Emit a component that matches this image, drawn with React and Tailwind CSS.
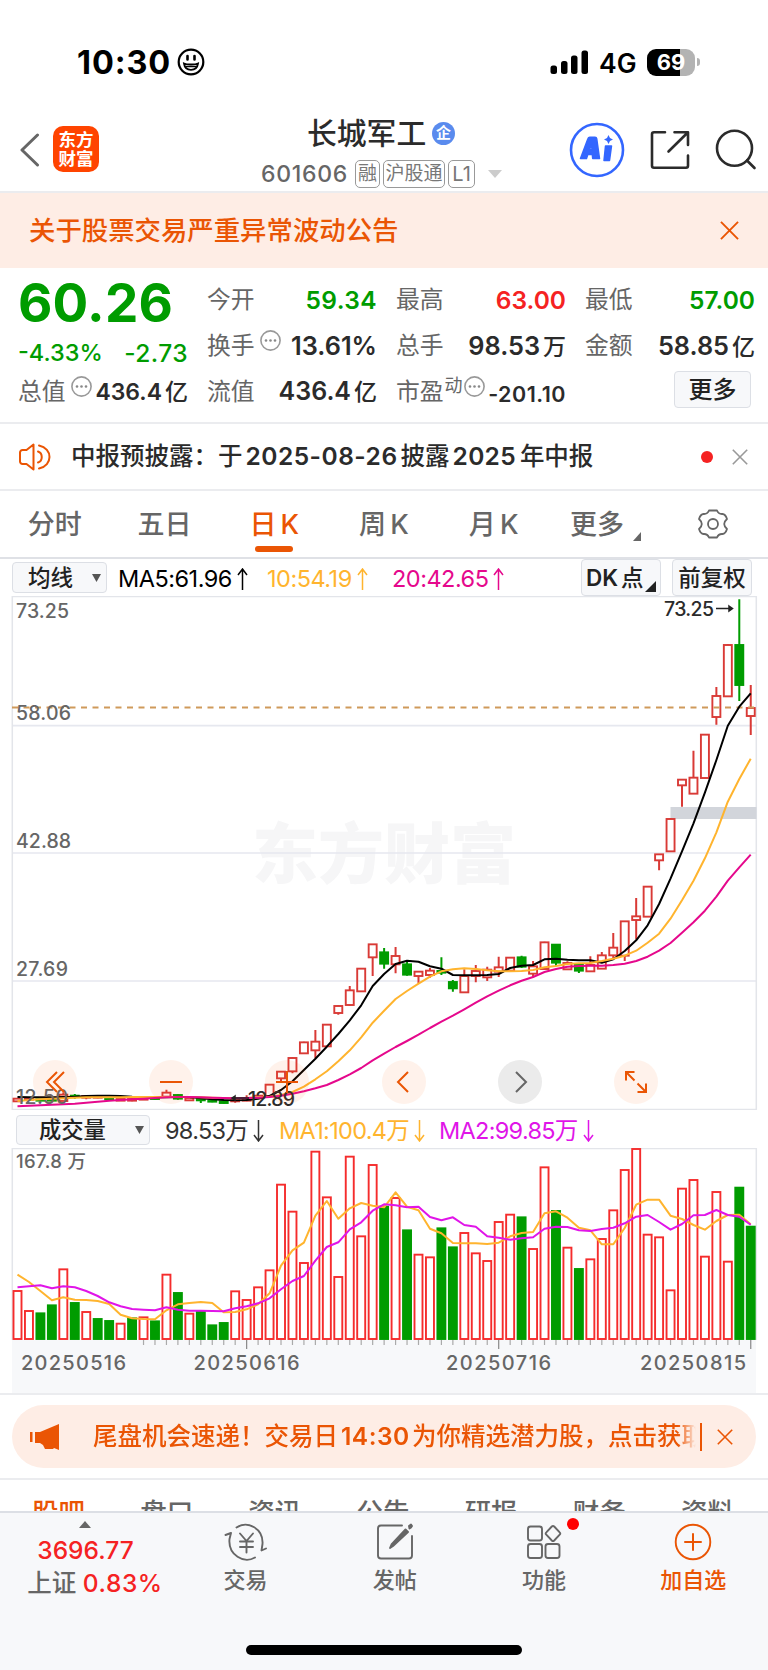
import { Fragment } from 'react';
import clsx from 'clsx';

const FONT = "font-['Inter','Noto_Sans_CJK_SC',sans-serif]";

const PITCH = 11.457;
const FIRST_X = 17.5;
const xAt = (i) => FIRST_X + i * PITCH;

// [up, high, top, bottom, low], in thirds of a pixel below y = 840
const CANDLES = [
    [1, 774, 776, 784, 784], [1, 774, 775, 779, 782], [0, 776, 778, 782, 784], [0, 774, 778, 782, 783],
    [1, 757, 764, 783, 783], [0, 762, 767, 771, 776], [1, 766, 768, 773, 778], [1, 768, 770, 773, 775],
    [0, 771, 774, 778, 781], [1, 774, 777, 782, 783], [1, 774, 777, 782, 784], [1, 773, 775, 779, 780],
    [0, 772, 774, 777, 778], [1, 749, 758, 770, 772], [0, 762, 765, 776, 779], [1, 771, 774, 781, 783],
    [0, 775, 777, 781, 789], [0, 781, 783, 785, 787], [0, 781, 784, 789, 791], [1, 778, 780, 784, 788],
    [1, 766, 775, 782, 784], [1, 764, 767, 774, 777], [1, 732, 734, 768, 770], [1, 693, 695, 715, 727],
    [1, 652, 654, 694, 700], [1, 605, 607, 640, 641], [1, 570, 605, 631, 655], [1, 552, 554, 619, 620],
    [1, 496, 498, 519, 524], [1, 438, 451, 495, 497], [1, 384, 386, 454, 455], [1, 312, 313, 352, 408],
    [0, 324, 337, 371, 386], [1, 321, 348, 373, 400], [0, 366, 373, 404, 407], [1, 394, 395, 408, 430],
    [1, 384, 392, 405, 413], [0, 352, 393, 398, 405], [0, 420, 426, 445, 455], [1, 388, 408, 457, 458],
    [1, 375, 393, 408, 427], [1, 380, 389, 412, 423], [1, 350, 382, 395, 411], [1, 351, 353, 392, 394],
    [0, 347, 352, 380, 384], [1, 363, 379, 401, 412], [1, 305, 307, 387, 388], [0, 312, 314, 368, 377],
    [1, 364, 369, 388, 389], [0, 370, 374, 392, 399], [1, 349, 375, 394, 396], [1, 336, 346, 386, 387],
    [1, 279, 323, 346, 355], [1, 243, 244, 347, 363], [1, 174, 229, 240, 298], [1, 139, 140, 230, 231],
    [1, 42, 43, 61, 91], [1, -65, -63, 34, 35], [1, -182, -181, -164, -100], [1, -268, -187, -139, -138],
    [1, -318, -316, -186, -185], [1, -459, -432, -369, -346], [1, -587, -585, -431, -430], [0, -722, -585, -465, -417],
    [1, -465, -396, -372, -315],
];

const MA5 = [771, 772, 772, 772, 771, 770, 768, 767, 767, 768, 770, 771, 772, 772, 771, 771, 775, 778, 780, 781, 780, 776, 768, 750, 724, 690, 656, 620, 582, 541, 496, 438, 402, 372, 362, 365, 379, 386, 405, 406, 406, 405, 402, 384, 377, 375, 358, 356, 359, 361, 361, 368, 358, 333, 301, 256, 192, 116, 34, -50, -142, -240, -343, -400, -440];
const MA10 = [783, 780, 778, 776, 775, 773, 772, 772, 772, 772, 771, 771, 771, 771, 771, 771, 772, 773, 774, 775, 774, 772, 770, 765, 756, 740, 718, 694, 664, 631, 592, 548, 512, 477, 453, 431, 410, 394, 388, 385, 387, 391, 394, 394, 393, 390, 382, 378, 372, 370, 369, 363, 356, 347, 332, 308, 281, 236, 181, 122, 55, -23, -115, -183, -244];
const MA20 = [799, 797, 796, 794, 793, 791, 788, 785, 782, 780, 778, 776, 774, 772, 771, 771, 772, 773, 774, 775, 774, 773, 771, 767, 761, 754, 745, 735, 720, 703, 684, 661, 641, 621, 603, 584, 564, 545, 527, 508, 488, 469, 452, 436, 422, 411, 396, 387, 380, 378, 377, 377, 375, 371, 363, 350, 332, 309, 278, 247, 212, 170, 122, 82, 44];

// [up, top], in thirds of a pixel below y = 1100
const VOLUMES = [
    [1, 573], [1, 633], [0, 640], [0, 616], [1, 508], [0, 609], [1, 636], [0, 657], [0, 663], [1, 671], [0, 655],
    [1, 652], [0, 664], [1, 524], [0, 579], [1, 641], [0, 634], [0, 676], [0, 669], [1, 574], [1, 600], [1, 562],
    [1, 511], [1, 254], [1, 335], [1, 489], [1, 155], [1, 292], [1, 531], [1, 170], [1, 409], [1, 195], [0, 320],
    [1, 294], [0, 391], [1, 464], [1, 472], [0, 385], [0, 442], [1, 399], [1, 460], [1, 483], [1, 366], [1, 344],
    [0, 352], [1, 447], [1, 202], [0, 333], [1, 443], [0, 507], [1, 478], [1, 417], [1, 331], [1, 210], [1, 147],
    [1, 404], [1, 412], [1, 571], [1, 266], [1, 240], [1, 470], [1, 276], [1, 485], [0, 263], [0, 380],
];

const VMA1 = [524, 546, 573, 601, 592, 599, 600, 603, 612, 644, 655, 657, 658, 631, 613, 609, 606, 609, 637, 636, 628, 613, 580, 497, 451, 428, 347, 303, 356, 325, 309, 317, 322, 277, 320, 331, 386, 400, 429, 430, 430, 432, 428, 409, 399, 396, 340, 334, 353, 383, 391, 433, 433, 384, 314, 299, 299, 347, 357, 375, 389, 363, 345, 344, 373];
const VMA2 = [562, 559, 556, 565, 559, 562, 573, 588, 607, 619, 627, 629, 631, 622, 629, 632, 632, 633, 634, 625, 619, 610, 595, 568, 543, 528, 482, 441, 427, 388, 367, 332, 313, 316, 322, 320, 351, 361, 352, 375, 380, 409, 413, 419, 415, 412, 386, 380, 381, 391, 393, 387, 383, 370, 350, 345, 366, 389, 372, 346, 345, 330, 345, 350, 374];

const polyline = (values, base) => values.map((v, i) => `${xAt(i).toFixed(1)},${(base + v / 3).toFixed(1)}`).join(' ');

function Cross({ size, className }) {
    return (
        <svg width={size} height={size} viewBox="0 0 20 20" fill="none" stroke="currentColor" strokeWidth="2" className={className}>
            <path d="M1 1 19 19M19 1 1 19" />
        </svg>
    );
}

function Arrow({ down }) {
    return (
        <svg width="11" height="22" viewBox="0 0 11 22" fill="none" stroke="currentColor" strokeWidth="1.5" className={clsx('ml-[5px] shrink-0', down && 'rotate-180')}>
            <path d="M5.5 22V1M1 7l4.5-6L10 7" />
        </svg>
    );
}

function Caret() {
    return (
        <svg width="9" height="8" viewBox="0 0 9 8" className="shrink-0">
            <path d="M0 0h9L4.500 8z" fill="#555" />
        </svg>
    );
}

function Info() {
    return (
        <svg width="21" height="21" viewBox="0 0 21 21" className="mb-[12px] ml-[5px] shrink-0">
            <circle cx="10.500" cy="10.500" r="9.600" fill="none" stroke="#999" strokeWidth="1.600" />
            <g fill="#888">
                <circle cx="6" cy="10.500" r="1.300" />
                <circle cx="10.500" cy="10.500" r="1.300" />
                <circle cx="15" cy="10.500" r="1.300" />
            </g>
        </svg>
    );
}

function StatusBar() {
    return (
        <div className="flex h-[100px] items-start pt-[43px]">
            <span className="ml-[77px] w-[94px] whitespace-nowrap text-[32.5px] leading-[39px] font-bold tracking-[0.9px] text-black">10:30</span>
            <svg width="28" height="28" viewBox="0 0 28 28" className="mt-[5px] ml-[6px]" fill="none" stroke="#000" strokeWidth="2.200">
                <circle cx="14" cy="14" r="12.300" />
                <path d="M7 15.500c2.500 1.300 11.500 1.300 14 0-.6 4-3.400 6.300-7 6.300s-6.400-2.300-7-6.300z" strokeWidth="1.800" />
                <path d="M8.500 18.500h11" strokeWidth="1.500" />
                <path d="M10.500 8v3.500M17.500 8v3.500" strokeWidth="2.600" strokeLinecap="round" />
            </svg>
            <svg width="38" height="25" viewBox="0 0 38 25" className="mt-[7px] ml-[345px]">
                <rect x="0.500" y="15.500" width="6.500" height="8.500" rx="2.500" />
                <rect x="11" y="11" width="6.500" height="13" rx="2.500" />
                <rect x="21" y="5.500" width="6.500" height="18.500" rx="2.500" />
                <rect x="31.500" y="0.500" width="6.500" height="23.500" rx="2.500" />
            </svg>
            <span className="ml-[11px] w-[38px] whitespace-nowrap text-[26.5px] leading-[41px] font-semibold text-black">4G</span>
            <div className="mt-[6px] ml-[10px] flex h-[27px] w-[48px] items-center justify-center rounded-[9px] bg-gradient-to-r from-black from-[69%] to-[#b3b3b3] to-[69%] text-[22px] font-bold text-white">
                69
            </div>
            <div className="mt-[15px] ml-[2px] h-[8px] w-[3px] rounded-r-full bg-[#b3b3b3]" />
        </div>
    );
}

function Header() {
    return (
        <div className="flex h-[93px] border-b-2 border-[#ebecef] text-[#2b2b2b]">
            <svg width="21" height="34" viewBox="0 0 21 34" className="mt-[33px] ml-[19px]" fill="none" stroke="#666" strokeWidth="3" strokeLinecap="round" strokeLinejoin="round">
                <path d="M18.500 2 3 17l15.500 15" />
            </svg>
            <div className="mt-[26px] ml-[13px] flex h-[46px] w-[46px] flex-col items-center justify-center rounded-[10px] bg-[#ff4400] text-[17.5px] leading-[19px] font-bold text-white">
                <span>东方</span>
                <span>财富</span>
            </div>
            <div className="ml-[162px] w-[241px]">
                <div className="mt-[12px] ml-[46px] flex h-[42px] items-center">
                    <span className="w-[119px] whitespace-nowrap text-[29.8px] font-medium">长城军工</span>
                    <span className="ml-[6px] flex h-[23px] w-[23px] items-center justify-center rounded-full bg-[#5a8bee] text-[15px] font-bold text-white">企</span>
                </div>
                <div className="mt-[5px] flex h-[30px] items-center gap-[3px] text-[#777]">
                    <span className="mr-[5px] w-[86px] whitespace-nowrap text-[23px] tracking-[0.7px] font-medium text-[#666]">601606</span>
                    <span className="flex h-[28px] w-[25px] items-center justify-center rounded-[5px] border-[1.5px] border-[#999] text-[19px]">融</span>
                    <span className="flex h-[28px] w-[63px] items-center justify-center rounded-[5px] border-[1.5px] border-[#999] text-[19px]">沪股通</span>
                    <span className="flex h-[28px] w-[27px] items-center justify-center rounded-[5px] border-[1.5px] border-[#999] text-[20px]">L1</span>
                    <svg width="14" height="8" viewBox="0 0 14 8" className="ml-[10px] shrink-0">
                        <path d="M0 0h14L7 8z" fill="#ccc" />
                    </svg>
                </div>
            </div>
            <svg width="56" height="56" viewBox="0 0 56 56" className="mt-[22px] ml-[67px]">
                <circle cx="28" cy="28" r="26" fill="none" stroke="#3366ff" strokeWidth="2.600" />
                <path fillRule="evenodd" d="M11.500 36.500 19 16.500q.4-1.300 1.800-1.300H26q1.500 0 1.700 1.500L30.500 36.500h-6.800l-.4-4h-4.500L17.500 36.500zM20.500 27.500h2.500l-.4-5z" fill="#3366ff" stroke="#3366ff" strokeWidth="1.500" strokeLinejoin="round" />
                <path d="M36.500 24h6l-2 14.500H35z" fill="#3366ff" stroke="#3366ff" strokeWidth="1.500" strokeLinejoin="round" />
                <path d="m39.500 13 1.500 3 3 1.500-3 1.500-1.500 3-1.500-3-3-1.500 3-1.500z" fill="#3366ff" />
            </svg>
            <svg width="40" height="40" viewBox="0 0 40 40" className="mt-[30px] ml-[25px]" fill="none" stroke="#2b2b2b" strokeWidth="2.600" strokeLinecap="round" strokeLinejoin="round">
                <path d="M15 2.300H4A2 2 0 0 0 2 4.300v31.500a2 2 0 0 0 2 2h32a2 2 0 0 0 2-2V25.500M24.500 2.300H38V15M37.500 2.800 18.500 21.500" />
            </svg>
            <svg width="42" height="42" viewBox="0 0 42 42" className="mt-[28px] ml-[25px]" fill="none" stroke="#2b2b2b" strokeWidth="2.600" strokeLinecap="round">
                <circle cx="19.500" cy="20.300" r="17.500" />
                <path d="M32 32.500 39.500 40" />
            </svg>
        </div>
    );
}

function Cell({ label, info, sup, value, unit, color = 'text-[#2b2b2b]', size = 'text-[24.5px]' }) {
    return (
        <div className="flex items-center justify-between whitespace-nowrap">
            <span className="flex items-center text-[23.8px] text-[#666]">
                {label}
                {sup && <span className="mb-[14px] -mr-[4px] ml-[1px] text-[18px]">{sup}</span>}
                {info && <Info />}
            </span>
            <span className={clsx('font-[560]', size, color)}>
                {value}
                {unit && <span className="ml-[3px] text-[23px] font-medium">{unit}</span>}
            </span>
        </div>
    );
}

function Quote() {
    return (
        <div className="grid h-[156px] grid-cols-[170px_170px_170px_170px] grid-rows-[46px_46px_46px] gap-x-[19px] border-b-2 border-[#ebecef] pt-[9px] pl-[18px]">
            <div className="row-span-2 text-[#009c00]">
                <div className="mt-[3px] text-[53px] leading-[46px] font-bold tracking-[0.2px]">60.26</div>
                <div className="mt-[12px] flex justify-between text-[23.5px] leading-[30px] font-medium">
                    <span>-4.33%</span>
                    <span className="text-[24.5px] tracking-[0.4px]">-2.73</span>
                </div>
            </div>
            <Cell label="今开" value="59.34" color="text-[#009c00] tracking-[0.4px]" />
            <Cell label="最高" value="63.00" color="text-[#f52222]" />
            <Cell label="最低" value="57.00" color="text-[#009c00]" />
            <Cell label="换手" info value="13.61%" size="text-[25.3px]" />
            <Cell label="总手" value="98.53" unit="万" size="text-[25.3px]" />
            <Cell label="金额" value="58.85" unit="亿" size="text-[25.3px]" />
            <Cell label="总值" info value="436.4" unit="亿" size="text-[23px]" />
            <Cell label="流值" value="436.4" unit="亿" size="text-[25px]" />
            <Cell label="市盈" sup="动" info value="-201.10" size="text-[21.5px] tracking-[0.5px] pt-[4px]" />
            <div className="flex justify-end pt-[2px] pr-[4px]">
                <span className="flex h-[37px] w-[77px] items-center justify-center rounded-[4px] border border-[#dcdfe5] bg-[#f7f8fa] text-[24px] font-medium text-[#222]">更多</span>
            </div>
        </div>
    );
}

function Notice() {
    return (
        <div className="flex h-[67px] items-center border-b-2 border-[#ebecef] text-[#2b2b2b]">
            <svg width="34" height="28" viewBox="0 0 34 28" className="ml-[18px]" fill="none" stroke="#ea5504" strokeWidth="2" strokeLinecap="round" strokeLinejoin="round">
                <path d="M15.500 1.500v25L8.500 21H4.500A2.500 2.500 0 0 1 2 18.500v-9A2.500 2.500 0 0 1 4.500 7h4zM20 8.500c5 1.500 5 9.500 0 11M21 2.500c14 3 14 20 0 23" />
            </svg>
            <span className="ml-[19px] text-[24.5px] font-medium whitespace-nowrap">中报预披露：于</span>
            <span className="ml-[3px] text-[24.5px] font-[560] tracking-[0.5px] whitespace-nowrap">2025-08-26</span>
            <span className="ml-[3px] text-[24.5px] font-medium whitespace-nowrap">披露</span>
            <span className="ml-[3px] text-[24.5px] font-[560] tracking-[0.3px] whitespace-nowrap">2025</span>
            <span className="ml-[4px] text-[24.5px] font-medium whitespace-nowrap">年中报</span>
            <span className="mr-[19px] ml-auto h-[12px] w-[12px] rounded-full bg-[#f52222]" />
            <Cross size={16} className="mr-[20px] text-[#999]" />
        </div>
    );
}

function Tabs() {
    const tabs = ['分时', '五日', '日 K', '周 K', '月 K', '更多'];
    return (
        <div className="grid h-[68px] grid-cols-7 border-b-2 border-[#dfe1e6] text-[27px] font-medium text-[#666]">
            {tabs.map((tab) => (
                <div key={tab} className={clsx('flex flex-col items-center whitespace-nowrap', tab === '日 K' && 'text-[#ea5504]')}>
                    <span className="mt-[13px] flex h-[42px] items-center [word-spacing:-3px]">
                        {tab === '更多' ? <span className="ml-[4px]">{tab}</span> : tab}
                        {tab === '更多' && (
                            <svg width="8" height="9" viewBox="0 0 8 9" className="mt-[22px] ml-[9px]">
                                <path d="M8 0v9H0z" fill="#666" />
                            </svg>
                        )}
                    </span>
                    {tab === '日 K' && <span className="h-[6px] w-[38px] rounded-full bg-[#ea5504]" />}
                </div>
            ))}
            <div className="flex justify-center pt-[17px]">
                <svg width="32" height="32" viewBox="0 0 32 32" fill="none" stroke="#666" strokeWidth="1.800" strokeLinejoin="round">
                    <path d="M12 2.500h8q1.500 3.800 5.500 3.500 3 .2 4.500 5-2.800 2.500-2.800 5t2.800 5q-1.500 4.800-4.500 5-4-.3-5.500 3.500h-8q-1.500-3.800-5.500-3.500-3-.2-4.500-5 2.800-2.500 2.800-5T2 11q1.500-4.800 4.500-5 4 .3 5.500-3.500z" />
                    <circle cx="16" cy="16" r="5" />
                </svg>
            </div>
        </div>
    );
}

function MaBar() {
    return (
        <div className="flex h-[37px] items-center pl-[12px] text-[23.5px] whitespace-nowrap">
            <span className="flex h-[31px] w-[95px] items-center justify-between rounded-[4px] border border-[#dcdfe5] bg-[#f7f8fa] pt-px pr-[5px] pl-[15px] text-[22.5px] font-medium text-[#222]">
                均线
                <Caret />
            </span>
            <span className="ml-[11px] flex w-[149px] items-center pt-[2px] font-[370] tracking-[-0.5px] text-black">MA5:61.96<Arrow /></span>
            <span className="flex w-[125px] items-center pt-[2px] font-[370] tracking-[-0.5px] text-[#ffb42e]">10:54.19<Arrow /></span>
            <span className="flex w-[189px] items-center pt-[2px] font-[370] tracking-[-0.5px] text-[#e5088c]">20:42.65<Arrow /></span>
            <span className="flex h-[37px] w-[80px] rounded-[4px] border border-[#dcdfe5] bg-[#f7f8fa] pl-[4px] text-[22.5px] leading-[36px] font-semibold text-[#222]">
                DK<span className="ml-[3px] font-medium">点</span>
                <svg width="11" height="11" viewBox="0 0 11 11" className="mt-[21px] ml-px shrink-0">
                    <path d="M11 0v11H0z" fill="#222" />
                </svg>
            </span>
            <span className="ml-[11px] flex h-[37px] w-[80px] items-center justify-center rounded-[4px] border border-[#dcdfe5] bg-[#f7f8fa] pt-px text-[22.5px] font-medium text-[#222]">前复权</span>
        </div>
    );
}

function Label({ x, y, width, children, fill = '#666', size = 19.5 }) {
    return (
        <text x={x} y={y} textLength={width} fontSize={size} fontWeight="550" fill={fill}>
            {children}
        </text>
    );
}

function KLineChart() {
    const buttons = [
        <path key="a" d="M20 1 10 11 20 21M13 1 3 11 13 21" />,
        <path key="b" d="M0 11h22" />,
        <path key="c" d="M0 11h22M11 0v22" />,
        <path key="d" d="M15 1 5 11 15 21" />,
        <path key="e" d="M7 1 17 11 7 21" />,
        <path key="f" d="M9.500 1H1v8.500M1 1l8.500 8.500M21 12.500V21h-8.500M21 21l-8.500-8.500" />,
    ];
    return (
        <div className="relative h-[514px]">
            <svg width="768" height="514" viewBox="0 596 768 514" className="block">
                <text x="252" y="878" textLength="264" fontSize="66" fontWeight="900" fill="#f6f6f7">东方财富</text>
                <path d="M12 725.700h745M12 853h745M12 981h745" stroke="#e6e8ef" strokeWidth="1.700" />
                <path d="M12.300 596.500h744v513h-744z" fill="none" stroke="#e3e5ea" strokeWidth="1.500" />
                <rect x="670.500" y="807" width="86" height="12" fill="#d2d5db" />
                {CANDLES.map(([up, high, top, bottom, low], i) => {
                    const x = xAt(i);
                    const y = (v) => 840 + v / 3;
                    const color = up ? '#d93a36' : '#009c00';
                    return (
                        <Fragment key={i}>
                            <path d={`M${x} ${y(high)}V${y(top)}M${x} ${y(bottom)}V${y(low)}`} stroke={color} strokeWidth="2" />
                            <rect x={x - 4} y={y(top)} width="8" height={Math.max(y(bottom) - y(top), 0.5)} fill={color} fillOpacity={up ? 0 : 1} stroke={color} strokeWidth="1.900" />
                        </Fragment>
                    );
                })}
                <path d="M12 707.500h745" stroke="#cf9a5b" strokeWidth="2" strokeDasharray="6 5.500" />
                <g fill="none" strokeWidth="2" strokeLinejoin="round">
                    <polyline points={polyline(MA5, 840)} stroke="#000" />
                    <polyline points={polyline(MA10, 840)} stroke="#ffb42e" />
                    <polyline points={polyline(MA20, 840)} stroke="#e5088c" />
                </g>
                <Label x="16" y="617.500" width="53">73.25</Label>
                <Label x="16" y="719.500" width="55">58.06</Label>
                <Label x="16" y="847.500" width="55">42.88</Label>
                <Label x="16" y="975.500" width="52">27.69</Label>
                <Label x="16" y="1103.500" width="52">12.50</Label>
                <Label x="248" y="1105.500" width="47" fill="#2b2b2b">12.89</Label>
                <Label x="664" y="615.500" width="50" fill="#2b2b2b">73.25</Label>
                <path d="M716 608.500h16M729 606l3.500 2.500-3.500 2.500zM249 1098h-16M235 1096l-3 2 3 2z" fill="#222" stroke="#222" strokeWidth="1.500" />
            </svg>
            <div className="absolute bottom-[6px] left-[32.500px] flex gap-[72.400px]">
                {buttons.map((icon, i) => (
                    <span key={i} className={clsx('flex h-[44px] w-[44px] items-center justify-center rounded-full', i === 4 ? 'bg-[#ebebeb]' : 'bg-[#ff5a00]/8')}>
                        <svg width="22" height="22" viewBox="0 0 22 22" fill="none" stroke={i === 4 ? '#666' : '#ea5504'} strokeWidth="2">
                            {icon}
                        </svg>
                    </span>
                ))}
            </div>
        </div>
    );
}

function VolumeBar() {
    return (
        <div className="flex h-[38px] items-center pt-px pl-[16px] text-[23.5px] whitespace-nowrap">
            <span className="flex h-[30px] w-[134px] items-center justify-between rounded-[4px] border border-[#dcdfe5] bg-[#f7f8fa] pt-px pr-[5px] pl-[22px] text-[22.3px] font-medium text-[#222]">
                成交量
                <Caret />
            </span>
            <span className="ml-[15px] flex w-[114px] items-center pt-[2px] font-[370] tracking-[-0.7px] text-[#333]">98.53万<Arrow down /></span>
            <span className="flex w-[160px] items-center pt-[2px] font-[370] tracking-[-0.7px] text-[#ffb42e]">MA1:100.4万<Arrow down /></span>
            <span className="flex items-center pt-[2px] font-[370] tracking-[-0.7px] text-[#e015e8]">MA2:99.85万<Arrow down /></span>
        </div>
    );
}

function VolumeChart() {
    return (
        <svg width="768" height="245" viewBox="0 1148 768 245" className="block">
            <rect x="12" y="1340" width="744" height="53" fill="#f7f8fa" />
            <path d="M12.300 1340V1148.500h744V1340" fill="none" stroke="#e3e5ea" strokeWidth="1.500" />
            <Label x="16" y="1167.500" width="70" size="18.500">167.8 万</Label>
            {VOLUMES.map(([up, top], i) => {
                const y = 1100 + top / 3;
                return (
                    <rect key={i} x={xAt(i) - 4} y={y} width="8" height={1339 - y} fill={up ? '#fff' : '#009c00'} stroke={up ? '#f52c2c' : '#009c00'} strokeWidth="1.900" />
                );
            })}
            <g fill="none" strokeWidth="2" strokeLinejoin="round">
                <polyline points={polyline(VMA1, 1100)} stroke="#ffb42e" />
                <polyline points={polyline(VMA2, 1100)} stroke="#e015e8" />
            </g>
            {VOLUMES.map((_, i) => {
                if (i < 11) return null;
                const major = i === 20 || i === 42 || i === 64;
                return <path key={i} d={`M${xAt(i)} 1340v${major ? 9 : 5}`} stroke={major ? '#888' : '#aaa'} strokeWidth="1.200" />;
            })}
            <Label x="21" y="1369.500" width="105" size="20">20250516</Label>
            <Label x="193.500" y="1369.500" width="106" size="20">20250616</Label>
            <Label x="446" y="1369.500" width="105" size="20">20250716</Label>
            <Label x="640" y="1369.500" width="106" size="20">20250815</Label>
        </svg>
    );
}

function Promo() {
    return (
        <div className="h-[87px] border-y-2 border-[#ebecef] px-[12px] pt-[10px]">
            <div className="flex h-[63px] items-center rounded-full bg-[#feede5] text-[24.5px] font-medium whitespace-nowrap text-[#ea5504]">
                <svg width="30" height="26" viewBox="0 0 30 26" className="ml-[18px]" fill="#ea5504">
                    <path d="M0 8h2.500v10H0zM5 8h5L29 0v26l-5-2-1 1h-8l-2-4-3-2H5z" />
                </svg>
                <div className="ml-[33px] flex w-[603px] overflow-hidden [mask-image:linear-gradient(to_right,black_97%,transparent)]">
                    <span className="w-[246px] shrink-0">尾盘机会速递！交易日</span>
                    <span className="ml-[2px] w-[70px] shrink-0 font-[560] tracking-[0.5px]">14:30</span>
                    <span className="ml-[1px] shrink-0">为你精选潜力股，点击获取</span>
                </div>
                <span className="ml-[4px] h-[28px] w-[1.500px] bg-[#ea5504]" />
                <Cross size={16} className="ml-[15px]" />
            </div>
        </div>
    );
}

function SectionTabs() {
    const items = ['股吧', '盘口', '资讯', '公告', '研报', '财务', '资料'];
    return (
        <div className="flex h-[31px] justify-between overflow-hidden pt-[15px] pr-[34px] pl-[32px] text-[26.5px] leading-[34px] font-medium text-[#666]">
            {items.map((item, i) => (
                <span key={item} className={clsx(i === 0 && 'text-[#ea5504]')}>{item}</span>
            ))}
        </div>
    );
}

function NavItem({ label, children, className = 'text-[#666]' }) {
    return (
        <div className={clsx('flex w-[149.300px] flex-col items-center', className)}>
            <svg width="44" height="40" viewBox="0 0 44 40" fill="none" stroke="currentColor" strokeWidth="1.900" strokeLinecap="round" strokeLinejoin="round" className="mt-[9px]">
                {children}
            </svg>
            <span className="mt-[3px] text-[22px] leading-[30px] font-medium">{label}</span>
        </div>
    );
}

function BottomNav() {
    return (
        <div className="h-[160px] border-t-2 border-[#dcdfe5] bg-[#f7f8fa]">
            <div className="flex h-[132px]">
                <div className="flex w-[171px] flex-col items-center">
                    <svg width="12" height="7" viewBox="0 0 12 7" className="mt-[8px]">
                        <path d="M6 0l6 7H0z" fill="#666" />
                    </svg>
                    <span className="mt-[7px] text-[24.5px] leading-[30px] font-medium text-[#f52222]">3696.77</span>
                    <span className="mt-[3px] ml-[19px] text-[24.5px] leading-[30px] font-medium whitespace-nowrap text-[#666]">
                        上证 <span className="tracking-[0.6px] text-[#f52222]">0.83%</span>
                    </span>
                </div>
                <NavItem label="交易">
                    <path d="M12.500 5.500C24-2 39.500 7 38.500 22l-1 6.500 4.500-2M31 35.500C20 42 4 33 5.500 17l1.500-6-5.500 2" />
                    <path d="M16 11.500l6.500 7.500 6.500-7.500M22.500 19v11.500M16 19.500h13M16 25h13" />
                </NavItem>
                <NavItem label="发帖">
                    <path d="M29 3.500H8A3 3 0 0 0 5 6.500v27a3 3 0 0 0 3 3h28a3 3 0 0 0 3-3V14" />
                    <path d="M36 4l2-1.500 1 1.500-1 1.500-1.500 1zM32.500 7.500l2.500 2.500L20 24l-3 2 1.500-3.500z" fill="currentColor" />
                </NavItem>
                <div className="relative">
                    <NavItem label="功能">
                        <rect x="6" y="4.500" width="14" height="14" rx="2.500" />
                        <path d="M29.800 4.500q1.200-1.200 2.400 0l5.500 5.800q1.200 1.200 0 2.400l-5.500 5.800q-1.200 1.200-2.400 0l-5.500-5.800q-1.200-1.200 0-2.400z" />
                        <rect x="6" y="22" width="14" height="14" rx="2.500" />
                        <rect x="23.500" y="22" width="14" height="14" rx="2.500" />
                    </NavItem>
                    <span className="absolute top-[5px] right-[40px] h-[12px] w-[12px] rounded-full bg-[#ff0000]" />
                </div>
                <NavItem label="加自选" className="text-[#ea5504]">
                    <circle cx="22" cy="20" r="17.300" />
                    <path d="M14 20h16M22 12v16" strokeWidth="2" />
                </NavItem>
            </div>
            <div className="mx-auto h-[10px] w-[276px] rounded-full bg-black" />
        </div>
    );
}

export default function App() {
    return (
        <div className={clsx('h-[1670px] w-[768px] overflow-hidden bg-white', FONT)}>
            <StatusBar />
            <Header />
            <div className="flex h-[75px] items-center justify-between bg-[#feede5] pr-[29px] pl-[29px] text-[#ea5504]">
                <span className="text-[26.4px] font-medium">关于股票交易严重异常波动公告</span>
                <Cross size={19} />
            </div>
            <Quote />
            <Notice />
            <Tabs />
            <MaBar />
            <KLineChart />
            <VolumeBar />
            <VolumeChart />
            <Promo />
            <SectionTabs />
            <BottomNav />
        </div>
    );
}
